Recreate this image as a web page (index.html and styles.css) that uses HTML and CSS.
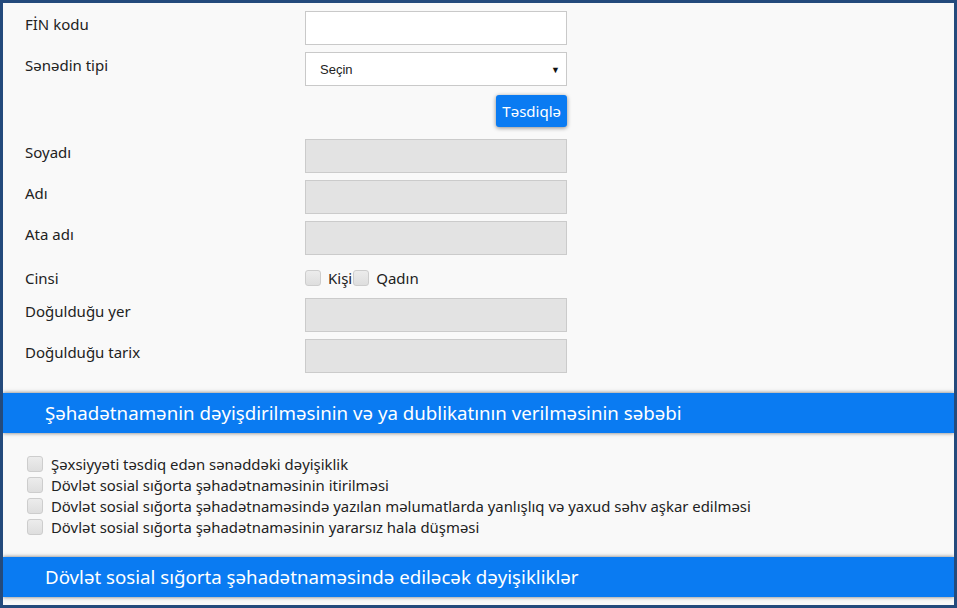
FILE: index.html
```html
<!DOCTYPE html>
<html lang="az">
<head>
  <meta charset="UTF-8" />
  <meta name="viewport" content="width=device-width, initial-scale=1" />
  <title>Sosial sığorta şəhadətnaməsi</title>
  <link rel="stylesheet" href="styles.css">
</head>
<body>
  <div class="frame">
    <form class="form">
      <div class="row row-hidden">
        <label></label>
        <input type="text" class="field" />
      </div>
      <div class="row">
        <label for="fin">FİN kodu</label>
        <input type="text" id="fin" class="field" />
      </div>
      <div class="row">
        <label for="docType">Sənədin tipi</label>
        <div class="select-wrap">
          <select id="docType" class="field select">
            <option>Seçin</option>
          </select>
        </div>
      </div>
      <div class="row row-btn">
        <span></span>
        <div class="btn-cell"><button type="button" class="btn">Təsdiqlə</button></div>
      </div>
      <div class="row">
        <label>Soyadı</label>
        <input type="text" class="field" disabled />
      </div>
      <div class="row">
        <label>Adı</label>
        <input type="text" class="field" disabled />
      </div>
      <div class="row">
        <label>Ata adı</label>
        <input type="text" class="field" disabled />
      </div>
      <div class="row row-gender">
        <label>Cinsi</label>
        <div class="gender">
          <input type="checkbox" class="check" id="male" /><label for="male">Kişi</label>
          <input type="checkbox" class="check" id="female" /><label for="female">Qadın</label>
        </div>
      </div>
      <div class="row">
        <label>Doğulduğu yer</label>
        <input type="text" class="field" disabled />
      </div>
      <div class="row">
        <label>Doğulduğu tarix</label>
        <input type="text" class="field" disabled />
      </div>
    </form>

    <div class="band">Şəhadətnamənin dəyişdirilməsinin və ya dublikatının verilməsinin səbəbi</div>

    <ul class="reasons">
      <li><input type="checkbox" class="check" id="r1" /><label for="r1">Şəxsiyyəti təsdiq edən sənəddəki dəyişiklik</label></li>
      <li><input type="checkbox" class="check" id="r2" /><label for="r2">Dövlət sosial sığorta şəhadətnaməsinin itirilməsi</label></li>
      <li><input type="checkbox" class="check" id="r3" /><label for="r3">Dövlət sosial sığorta şəhadətnaməsində yazılan məlumatlarda yanlışlıq və yaxud səhv aşkar edilməsi</label></li>
      <li><input type="checkbox" class="check" id="r4" /><label for="r4">Dövlət sosial sığorta şəhadətnaməsinin yararsız hala düşməsi</label></li>
    </ul>

    <div class="band">Dövlət sosial sığorta şəhadətnaməsində ediləcək dəyişikliklər</div>
  </div>
</body>
</html>
```

FILE: styles.css
```css
* {
  box-sizing: border-box;
  margin: 0;
  padding: 0;
}

html, body {
  height: 100%;
  overflow: hidden;
}

body {
  font-family: 'Noto Sans', 'Open Sans', sans-serif;
  color: #222;
  background: #244a7c;
}

.frame {
  height: 608px;
  border: 3px solid #244a7c;
  background: #f9f9f9;
  overflow: hidden;
}

.form {
  margin-top: -34px;
  padding-left: 22px;
}

.row {
  display: grid;
  grid-template-columns: 280px 262px;
  align-items: start;
  margin-bottom: 7px;
}

.row > label {
  font-size: 15px;
  line-height: 20px;
  padding-top: 3px;
}

.row-hidden {
  margin-bottom: 8px;
}

.field {
  height: 34px;
  width: 262px;
  border: 1px solid #c9c9c9;
  background: #fff;
  font-family: 'Liberation Sans', Arial, sans-serif;
  font-size: 13px;
  outline: none;
}

.field:disabled {
  background: #e3e3e3;
  border-color: #cbcbcb;
}

.select-wrap {
  position: relative;
}

.select {
  appearance: none;
  -webkit-appearance: none;
  padding-left: 14px;
  color: #222;
}

.select-wrap::after {
  content: "\25BC";
  position: absolute;
  right: 7px;
  top: 11px;
  font-size: 9px;
  color: #111;
  pointer-events: none;
}

.row-btn {
  margin-top: 9px;
  margin-bottom: 12px;
}

.btn-cell {
  display: flex;
  justify-content: flex-end;
}

.btn {
  background: #0a7bf2;
  color: #fff;
  border: none;
  border-radius: 3px;
  height: 32px;
  padding: 0 6px;
  font-family: inherit;
  font-size: 15px;
  box-shadow: 0 1px 4px rgba(0, 0, 0, 0.45);
  cursor: pointer;
}

.row-gender {
  margin-top: 10px;
  margin-bottom: 7px;
}

.gender {
  display: flex;
  align-items: center;
  height: 26px;
  font-size: 15px;
}

.gender label {
  margin-left: 7px;
}

.check {
  appearance: none;
  -webkit-appearance: none;
  width: 16px;
  height: 16px;
  border: 1px solid #cdcdcd;
  border-radius: 3px;
  background: linear-gradient(#ececec, #dedede);
  flex-shrink: 0;
}

.gender .check + label + .check {
  margin-left: 1px;
}

.band {
  margin-top: 20px;
  height: 40px;
  background: #0a7bf2;
  color: #fff;
  font-size: 18.7px;
  line-height: 40px;
  padding-left: 42px;
  box-shadow: 0 0 4px rgba(0, 0, 0, 0.55);
}

.reasons {
  list-style: none;
  padding: 20px 0 0 24px;
  height: 124px;
}

.reasons li {
  display: flex;
  align-items: center;
  height: 21px;
  font-size: 14.9px;
}

.reasons label {
  margin-left: 8px;
}

.reasons + .band {
  margin-top: 0;
}
```
